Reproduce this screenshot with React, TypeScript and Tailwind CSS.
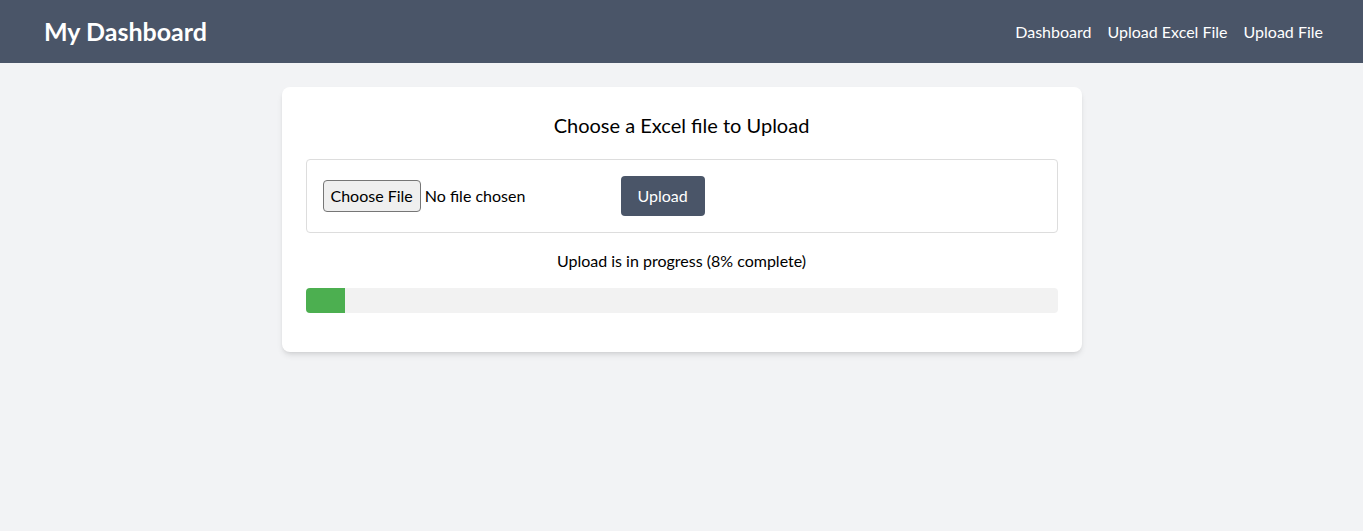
import { useState } from "react"

export default function App() {
  const [progress] = useState(8)

  return (
    <div className="min-h-screen bg-[#f2f3f5] text-black font-['Lato',sans-serif]">
      <nav className="h-[63px] bg-[#4a5568] text-white flex items-center justify-between px-10">
        <h1 className="text-[25px] font-bold pl-1">My Dashboard</h1>
        <div className="flex gap-4 text-base">
          <a href="#">Dashboard</a>
          <a href="#">Upload Excel File</a>
          <a href="#">Upload File</a>
        </div>
      </nav>

      <div className="flex justify-center pt-6">
        <div className="w-[800px] bg-white rounded-lg shadow-md p-6 pb-[39px]">
          <h2 className="text-xl text-center mb-5">Choose a Excel file to Upload</h2>

          <div className="border border-[#ddd] rounded flex items-center px-4 py-4 h-[74px]">
            <input
              type="file"
              className="w-[298px] text-base file:border file:border-[#767676] file:bg-[#efefef] file:rounded-sm file:px-[7px] file:py-[3px] file:mr-1 file:text-base"
            />
            <button className="bg-[#4a5568] text-white rounded px-[17px] h-10">Upload</button>
          </div>

          <p className="text-center mt-4 mb-[15px]">Upload is in progress ({progress}% complete)</p>

          <div className="h-[25px] bg-[#f2f2f2] rounded overflow-hidden">
            <div className="h-full w-[39px] bg-[#4caf50]" />
          </div>
        </div>
      </div>
    </div>
  )
}
